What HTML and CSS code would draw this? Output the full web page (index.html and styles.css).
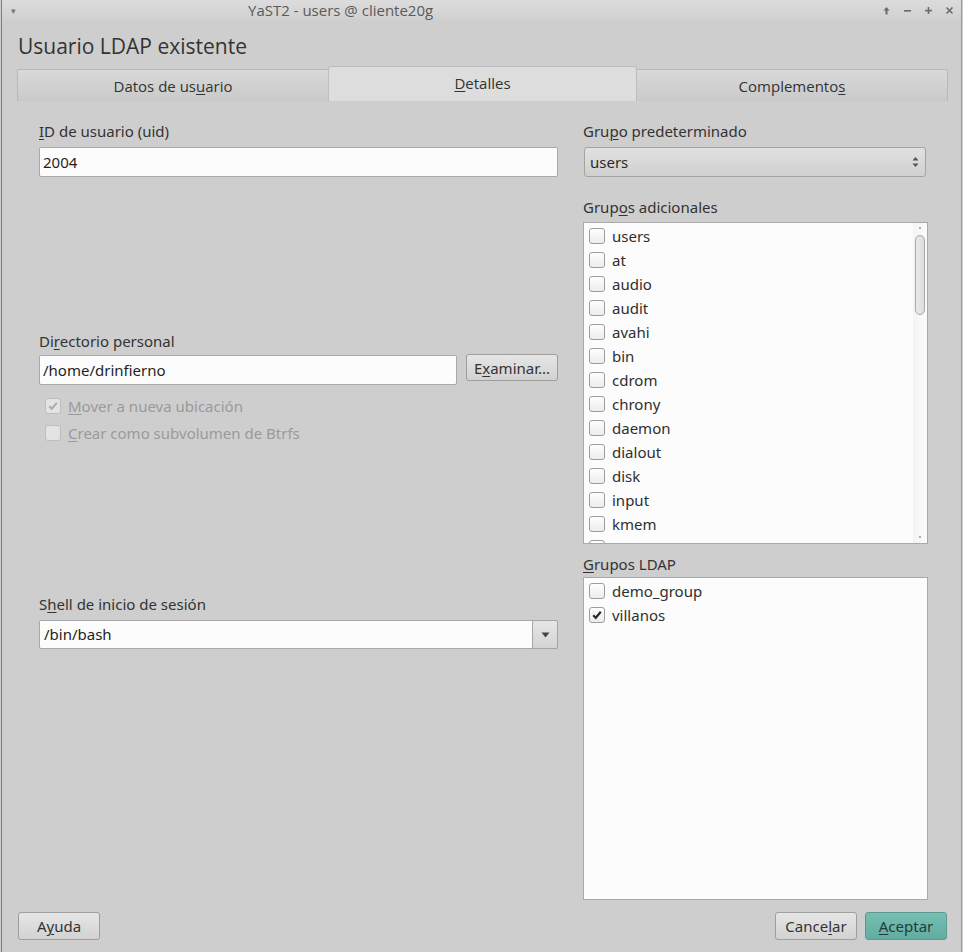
FILE: index.html
```html
<!DOCTYPE html>
<html lang="es">
<head>
<meta charset="utf-8">
<title>YaST2 - users @ cliente20g</title>
<link rel="stylesheet" href="styles.css">
</head>
<body>
<div class="window">
  <div class="titlebar">
    <span class="tb-menu">&#9662;</span>
    <span class="tb-title">YaST2 - users @ cliente20g</span>
    <span class="tb-btns">
      <svg width="9" height="9" viewBox="0 0 9 9"><path d="M4.5 1 L1.5 4.5 H3.5 V8.5 H5.5 V4.5 H7.5 Z" fill="#6a6a6a"/></svg>
      <svg width="9" height="9" viewBox="0 0 9 9"><rect x="1" y="4" width="7" height="1.6" fill="#6a6a6a"/></svg>
      <svg width="9" height="9" viewBox="0 0 9 9"><rect x="1" y="3.8" width="7" height="1.6" fill="#6a6a6a"/><rect x="3.7" y="1" width="1.6" height="7" fill="#6a6a6a"/></svg>
      <svg width="9" height="9" viewBox="0 0 9 9"><path d="M1.5 1.5 L7.5 7.5 M7.5 1.5 L1.5 7.5" stroke="#6a6a6a" stroke-width="1.6"/></svg>
    </span>
  </div>
  <div class="content">
    <h1 class="heading">Usuario LDAP existente</h1>
    <div class="tabs">
      <div class="tab">Datos de us<u>u</u>ario</div>
      <div class="tab tab-active"><u>D</u>etalles</div>
      <div class="tab">Complemento<u>s</u></div>
    </div>
    <div class="panel">
      <div class="col-left">
        <div class="group g-uid">
          <label class="label"><u>I</u>D de usuario (uid)</label>
          <div class="input">2004</div>
        </div>
        <div class="group g-home">
          <label class="label">Di<u>r</u>ectorio personal</label>
          <div class="row">
            <div class="input input-home">/home/drinfierno</div>
            <div class="btn btn-exam">E<u>x</u>aminar...</div>
          </div>
          <div class="check disabled first-check">
            <span class="box checked"><svg width="12" height="12" viewBox="0 0 12 12"><path d="M2.2 6.2 L4.8 8.8 L9.8 2.8" fill="none" stroke="#aaa" stroke-width="2"/></svg></span>
            <span><u>M</u>over a nueva ubicación</span>
          </div>
          <div class="check disabled">
            <span class="box"></span>
            <span><u>C</u>rear como subvolumen de Btrfs</span>
          </div>
        </div>
        <div class="group g-shell">
          <label class="label">S<u>h</u>ell de inicio de sesión</label>
          <div class="combo">
            <div class="combo-text">/bin/bash</div>
            <div class="combo-btn"><svg width="9" height="6" viewBox="0 0 9 6"><path d="M0.5 0.5 H8.5 L4.5 5.5 Z" fill="#444"/></svg></div>
          </div>
        </div>
      </div>
      <div class="col-right">
        <label class="label">Gru<u>p</u>o predeterminado</label>
        <div class="select">
          <span>users</span>
          <svg class="sel-arrows" width="7" height="12" viewBox="0 0 7 12"><path d="M3.5 1 L6.5 4.5 H0.5 Z M3.5 11 L6.5 7.5 H0.5 Z" fill="#555"/></svg>
        </div>
        <label class="label label-gap">Grup<u>o</u>s adicionales</label>
        <div class="listbox lb-groups">
          <div class="items">
            <div class="check"><span class="box"></span><span>users</span></div>
            <div class="check"><span class="box"></span><span>at</span></div>
            <div class="check"><span class="box"></span><span>audio</span></div>
            <div class="check"><span class="box"></span><span>audit</span></div>
            <div class="check"><span class="box"></span><span>avahi</span></div>
            <div class="check"><span class="box"></span><span>bin</span></div>
            <div class="check"><span class="box"></span><span>cdrom</span></div>
            <div class="check"><span class="box"></span><span>chrony</span></div>
            <div class="check"><span class="box"></span><span>daemon</span></div>
            <div class="check"><span class="box"></span><span>dialout</span></div>
            <div class="check"><span class="box"></span><span>disk</span></div>
            <div class="check"><span class="box"></span><span>input</span></div>
            <div class="check"><span class="box"></span><span>kmem</span></div>
            <div class="check"><span class="box"></span><span>kvm</span></div>
          </div>
          <div class="scrollbar">
            <span class="sb-dot"></span>
            <span class="thumb"></span>
            <span class="sb-dot sb-dot-bottom"></span>
          </div>
        </div>
        <label class="label label-gap2"><u>G</u>rupos LDAP</label>
        <div class="listbox lb-ldap">
          <div class="items">
            <div class="check"><span class="box"></span><span>demo_group</span></div>
            <div class="check"><span class="box checked"><svg width="12" height="12" viewBox="0 0 12 12"><path d="M2.2 6.2 L4.8 8.8 L9.8 2.8" fill="none" stroke="#2a2a2a" stroke-width="2.2"/></svg></span><span>villanos</span></div>
          </div>
        </div>
      </div>
    </div>
    <div class="footer">
      <div class="btn btn-foot">A<u>y</u>uda</div>
      <div class="foot-right">
        <div class="btn btn-foot">Cance<u>l</u>ar</div>
        <div class="btn btn-foot btn-primary"><u>A</u>ceptar</div>
      </div>
    </div>
  </div>
</div>
</body>
</html>
```
FILE: styles.css
```css
* { box-sizing: border-box; }
html, body { margin: 0; padding: 0; }
body {
  width: 963px;
  height: 952px;
  overflow: hidden;
  background: #cecece;
  font-family: "Noto Sans", "Open Sans", sans-serif;
  font-size: 15px;
  color: #2f2f2f;
}
u { text-decoration-thickness: 1px; text-underline-offset: 2px; }
.window {
  height: 952px;
  margin: 0 1px 0 1px;
  border-left: 1px solid #7d7d7d;
  border-right: 1px solid #9a9a9a;
  background: #cecece;
  display: flex;
  flex-direction: column;
}
.titlebar {
  height: 20px;
  display: flex;
  align-items: center;
  background: linear-gradient(#dcdcdc, #d0d0d0);
  font-family: "Open Sans", sans-serif;
  font-size: 15px;
  color: #5a5a5a;
}
.tb-menu { font-size: 9px; color: #777; margin-left: 9px; }
.tb-title { margin-left: 232px; }
.tb-btns { margin-left: auto; display: flex; gap: 12px; margin-right: 7px; }
.content { flex: 1; display: flex; flex-direction: column; padding: 0 13px 0 15px; }
.heading {
  margin: 12px 0 0 1px;
  font-family: "Open Sans", sans-serif;
  font-weight: 400;
  font-size: 21px;
  line-height: 28px;
  color: #333;
}
.tabs { display: flex; margin-top: 7px; height: 34px; align-items: flex-end; }
.tab {
  flex: 0 0 311px;
  height: 32px;
  display: flex; align-items: center; justify-content: center;
  border: 1px solid #b8b8b8;
  border-bottom: none;
  background: linear-gradient(#d9d9d9, #c9c9c9);
  font-family: "Open Sans", sans-serif;
  font-size: 15px;
  color: #333;
  padding-top: 1px;
}
.tab:first-child { border-right: none; border-radius: 2px 0 0 0; }
.tab:last-child { border-left: none; border-radius: 0 2px 0 0; }
.tab-active {
  flex-basis: 309px;
  height: 35px;
  background: #dddddd;
  border-radius: 3px 3px 0 0;
  padding-top: 0;
  padding-bottom: 2px;
  border-color: #bdbdbd;
}
.panel {
  display: flex;
  padding: 0 0 0 22px;
  height: 800px;
  gap: 25px;
}
.col-left { width: 519px; display: flex; flex-direction: column; }
.col-right { width: 344px; display: flex; flex-direction: column; padding-top: 20px; }
.label { display: block; height: 20px; line-height: 20px; color: #333; padding-left: 0; }
.input {
  height: 30px;
  margin-top: 6px;
  background: #fcfcfc;
  border: 1px solid #a9a9a9;
  border-radius: 2px;
  padding: 0 0 0 3px;
  line-height: 28px;
  color: #1f1f1f;
}
.group { display: flex; flex-direction: column; }
.g-uid { padding-top: 20px; }
.g-home { margin-top: 154px; }
.g-shell { margin-top: 148px; }
.row { display: flex; gap: 9px; align-items: flex-start; margin-top: 4px; }
.row .input { margin-top: 0; }
.input-home { flex: 0 0 418px; }
.btn {
  height: 27px;
  display: flex; align-items: center; justify-content: center;
  border: 1px solid #9e9e9e;
  border-radius: 3px;
  background: linear-gradient(#e6e6e6, #d2d2d2);
  color: #333;
}
.btn-exam { width: 92px; margin-top: -1px; }
.check { display: flex; align-items: center; height: 24px; gap: 7px; }
.box {
  width: 16px; height: 16px;
  border: 1px solid #9d9d9d;
  border-radius: 3px;
  background: linear-gradient(#ffffff, #ececec);
  display: flex; align-items: center; justify-content: center;
  flex: none;
}
.disabled { color: #9a9a9a; padding-left: 6px; height: 27px; }
.disabled .box { border-color: #bdbdbd; background: #e3e3e3; }
.first-check { margin-top: 7px; }
.combo {
  margin-top: 6px;
  display: flex;
  height: 29px;
  border: 1px solid #a9a9a9;
  border-radius: 2px;
  background: #fcfcfc;
}
.combo-text { flex: 1; line-height: 27px; padding-left: 4px; color: #1f1f1f; }
.combo-btn {
  width: 26px;
  margin: -1px -1px -1px 0;
  border: 1px solid #a5a5a5;
  border-radius: 0 2px 2px 0;
  background: linear-gradient(#e6e6e6, #d4d4d4);
  display: flex; align-items: center; justify-content: center;
}
.select {
  margin-top: 6px;
  margin-left: 1px;
  width: 342px;
  height: 30px;
  border: 1px solid #a3a3a3;
  border-radius: 3px;
  background: linear-gradient(#e1e1e1, #d0d0d0);
  display: flex; align-items: center;
  padding: 0 6px 0 5px;
  color: #2a2a2a;
}
.sel-arrows { margin-left: auto; }
.label-gap { margin-top: 20px; }
.label-gap2 { margin-top: 10px; }
.listbox {
  margin-top: 5px;
  width: 345px;
  height: 322px;
  background: #fcfcfc;
  border: 1px solid #a9a9a9;
  display: flex;
  overflow: hidden;
}
.items { flex: 1; padding: 1px 0 0 5px; }
.scrollbar {
  width: 14px;
  background: linear-gradient(90deg, #f4f4f4, #fbfbfb);
  display: flex; flex-direction: column; align-items: center;
}
.sb-dot { width: 2px; height: 2px; background: #999; margin-top: 4px; border-radius: 1px; }
.sb-dot-bottom { margin-top: auto; margin-bottom: 5px; }
.thumb {
  width: 10px; height: 80px;
  margin-top: 6px;
  border: 1px solid #a8a8a8;
  border-radius: 5px;
  background: linear-gradient(90deg, #eaeaea, #dcdcdc);
}
.lb-ldap { height: 323px; margin-top: 3px; }
.lb-ldap .items { padding-top: 1px; }
.footer {
  margin-top: auto;
  margin-bottom: 12px;
  display: flex;
  padding-left: 1px;
  padding-right: 1px;
}
.btn-foot { width: 82px; height: 28px; }
.foot-right { margin-left: auto; display: flex; gap: 8px; }
.btn-primary { background: linear-gradient(#75bfb3, #62ad9f); border-color: #5b9b8f; color: #1f3d37; }
```
